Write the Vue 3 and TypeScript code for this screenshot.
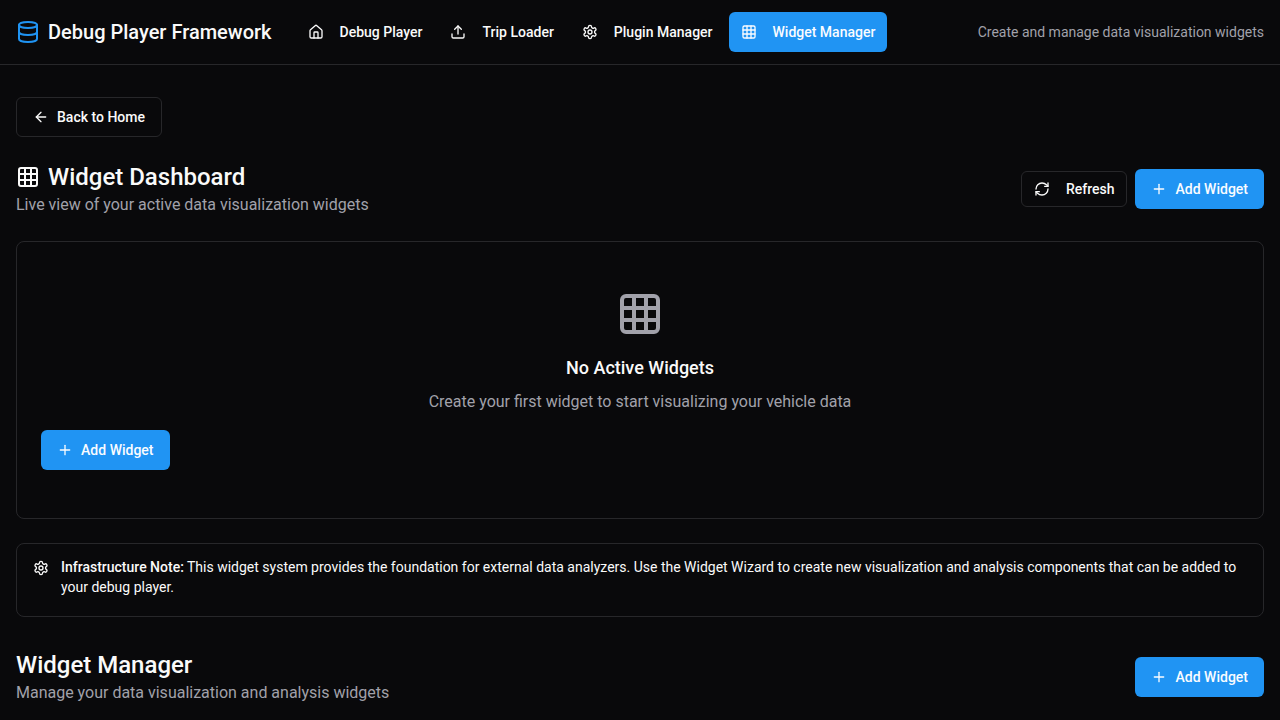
<script setup lang="ts">
import { defineComponent, h } from 'vue'

type Shape = [tag: string, attrs: Record<string, string | number>]

const shapes: Record<string, Shape[]> = {
  database: [
    ['ellipse', { cx: 12, cy: 5, rx: 9, ry: 3 }],
    ['path', { d: 'M3 5V19A9 3 0 0 0 21 19V5' }],
    ['path', { d: 'M3 12A9 3 0 0 0 21 12' }],
  ],
  house: [
    ['path', { d: 'M15 21v-8a1 1 0 0 0-1-1h-4a1 1 0 0 0-1 1v8' }],
    ['path', { d: 'M3 10a2 2 0 0 1 .709-1.528l7-5.999a2 2 0 0 1 2.582 0l7 5.999A2 2 0 0 1 21 10v9a2 2 0 0 1-2 2H5a2 2 0 0 1-2-2z' }],
  ],
  upload: [
    ['path', { d: 'M21 15v4a2 2 0 0 1-2 2H5a2 2 0 0 1-2-2v-4' }],
    ['path', { d: 'm17 8-5-5-5 5' }],
    ['path', { d: 'M12 3v12' }],
  ],
  settings: [
    ['path', { d: 'M12.22 2h-.44a2 2 0 0 0-2 2v.18a2 2 0 0 1-1 1.73l-.43.25a2 2 0 0 1-2 0l-.15-.08a2 2 0 0 0-2.73.73l-.22.38a2 2 0 0 0 .73 2.73l.15.1a2 2 0 0 1 1 1.72v.51a2 2 0 0 1-1 1.74l-.15.09a2 2 0 0 0-.73 2.73l.22.38a2 2 0 0 0 2.73.73l.15-.08a2 2 0 0 1 2 0l.43.25a2 2 0 0 1 1 1.73V20a2 2 0 0 0 2 2h.44a2 2 0 0 0 2-2v-.18a2 2 0 0 1 1-1.73l.43-.25a2 2 0 0 1 2 0l.15.08a2 2 0 0 0 2.73-.73l.22-.39a2 2 0 0 0-.73-2.73l-.15-.08a2 2 0 0 1-1-1.74v-.5a2 2 0 0 1 1-1.74l.15-.09a2 2 0 0 0 .73-2.73l-.22-.38a2 2 0 0 0-2.73-.73l-.15.08a2 2 0 0 1-2 0l-.43-.25a2 2 0 0 1-1-1.73V4a2 2 0 0 0-2-2z' }],
    ['circle', { cx: 12, cy: 12, r: 3 }],
  ],
  grid: [
    ['rect', { x: 3, y: 3, width: 18, height: 18, rx: 2 }],
    ['path', { d: 'M3 9h18' }],
    ['path', { d: 'M3 15h18' }],
    ['path', { d: 'M9 3v18' }],
    ['path', { d: 'M15 3v18' }],
  ],
  arrowLeft: [
    ['path', { d: 'm12 19-7-7 7-7' }],
    ['path', { d: 'M19 12H5' }],
  ],
  refresh: [
    ['path', { d: 'M3 12a9 9 0 0 1 9-9 9.75 9.75 0 0 1 6.74 2.74L21 8' }],
    ['path', { d: 'M21 3v5h-5' }],
    ['path', { d: 'M21 12a9 9 0 0 1-9 9 9.75 9.75 0 0 1-6.74-2.74L3 16' }],
    ['path', { d: 'M8 16H3v5' }],
  ],
  plus: [
    ['path', { d: 'M5 12h14' }],
    ['path', { d: 'M12 5v14' }],
  ],
}

const Icon = defineComponent({
  props: { name: { type: String, required: true }, size: { type: Number, default: 16 } },
  setup(props) {
    return () =>
      h(
        'svg',
        {
          width: props.size,
          height: props.size,
          viewBox: '0 0 24 24',
          fill: 'none',
          stroke: 'currentColor',
          'stroke-width': 2,
          'stroke-linecap': 'round',
          'stroke-linejoin': 'round',
          'aria-hidden': 'true',
        },
        shapes[props.name].map(([tag, attrs]) => h(tag, attrs)),
      )
  },
})

const navItems = [
  { label: 'Debug Player', icon: 'house', active: false },
  { label: 'Trip Loader', icon: 'upload', active: false },
  { label: 'Plugin Manager', icon: 'settings', active: false },
  { label: 'Widget Manager', icon: 'grid', active: true },
]
</script>

<template>
  <div class="page">
    <header class="topbar">
      <div class="brand">
        <Icon class="icon brand-icon" name="database" :size="24" />
        <span class="brand-name">Debug Player Framework</span>
      </div>
      <nav class="nav">
        <button
          v-for="item in navItems"
          :key="item.label"
          class="btn nav-btn"
          :class="{ primary: item.active }"
        >
          <Icon class="icon" :name="item.icon" />
          {{ item.label }}
        </button>
      </nav>
      <span class="tagline">Create and manage data visualization widgets</span>
    </header>

    <main class="content">
      <button class="btn outline back"><Icon class="icon" name="arrowLeft" />Back to Home</button>

      <section class="section-head">
        <div>
          <h1 class="title"><Icon class="icon" name="grid" :size="24" />Widget Dashboard</h1>
          <p class="muted">Live view of your active data visualization widgets</p>
        </div>
        <div class="actions">
          <button class="btn outline small"><Icon class="icon" name="refresh" />Refresh</button>
          <button class="btn primary"><Icon class="icon" name="plus" />Add Widget</button>
        </div>
      </section>

      <section class="card">
        <div class="empty">
          <Icon class="icon muted" name="grid" :size="48" />
          <h3 class="empty-title">No Active Widgets</h3>
          <p class="muted">Create your first widget to start visualizing your vehicle data</p>
        </div>
        <button class="btn primary"><Icon class="icon" name="plus" />Add Widget</button>
      </section>

      <aside class="note">
        <Icon class="icon" name="settings" />
        <p class="note-text">
          <strong>Infrastructure Note:</strong> This widget system provides the foundation for
          external data analyzers. Use the Widget Wizard to create new visualization and analysis
          components that can be added to your debug player.
        </p>
      </aside>

      <section class="section-head">
        <div>
          <h2 class="title">Widget Manager</h2>
          <p class="muted">Manage your data visualization and analysis widgets</p>
        </div>
        <button class="btn primary"><Icon class="icon" name="plus" />Add Widget</button>
      </section>
    </main>
  </div>
</template>

<style>
html,
body {
  background: #09090b;
  overflow: hidden;
}
</style>

<style scoped>
.page {
  box-sizing: border-box;
  height: 720px;
  overflow: hidden;
  background: #09090b;
  color: #fafafa;
  font-family: Roboto, 'Liberation Sans', sans-serif;
  font-size: 16px;
  line-height: 24px;
}
.page * {
  box-sizing: border-box;
}
h1,
h2,
h3,
p {
  margin: 0;
}
.icon {
  display: block;
  flex: none;
}
.topbar {
  display: flex;
  align-items: center;
  height: 65px;
  padding: 0 16px;
  border-bottom: 1px solid #27272a;
}
.brand {
  display: flex;
  align-items: center;
  gap: 8px;
}
.brand-icon {
  color: #2094f3;
}
.brand-name {
  font-size: 20px;
  line-height: 28px;
  font-weight: 500;
  word-spacing: 0.03px;
}
.nav {
  display: flex;
  gap: 4px;
  margin-left: 24px;
}
.tagline {
  margin-left: auto;
  font-size: 14px;
  line-height: 20px;
  color: #a1a1aa;
}
.btn {
  display: inline-flex;
  align-items: center;
  justify-content: center;
  gap: 8px;
  height: 40px;
  padding: 0 16px;
  border: 0;
  border-radius: 6px;
  background: transparent;
  color: #fafafa;
  font: 500 14px/20px Roboto, 'Liberation Sans', sans-serif;
  word-spacing: 0.1px;
  white-space: nowrap;
}
.nav-btn {
  gap: 16px;
  padding: 0 12px;
  word-spacing: 0.08px;
}
.nav-btn.primary {
  word-spacing: -0.05px;
}
.btn.primary {
  background: #2094f3;
  color: #fafcff;
}
.outline {
  border: 1px solid #27272a;
}
.small {
  height: 36px;
  padding: 0 12px;
  gap: 16px;
}
.content {
  display: flex;
  flex-direction: column;
  padding: 32px 16px 0;
}
.back {
  align-self: flex-start;
  margin-bottom: 24px;
  word-spacing: 0;
}
.section-head {
  display: flex;
  align-items: center;
  justify-content: space-between;
}
.title {
  display: flex;
  align-items: center;
  gap: 8px;
  font-size: 24px;
  line-height: 32px;
  font-weight: 500;
}
.muted {
  color: #a1a1aa;
  word-spacing: -0.03px;
}
.actions {
  display: flex;
  align-items: center;
  gap: 8px;
}
.card {
  margin-top: 24px;
  padding: 48px 24px;
  border: 1px solid #27272a;
  border-radius: 8px;
}
.empty {
  display: flex;
  flex-direction: column;
  align-items: center;
  margin-bottom: 16px;
}
.empty-title {
  margin: 16px 0 8px;
  font-size: 18px;
  line-height: 28px;
  font-weight: 500;
}
.note {
  display: flex;
  gap: 12px;
  margin: 24px 0 32px;
  padding: 16px;
  border: 1px solid #27272a;
  border-radius: 8px;
}
.note-text {
  margin: -3px 0 3px;
  font-size: 14px;
  line-height: 20px;
  word-spacing: -0.015px;
}
.note-text strong {
  font-weight: 500;
}
</style>
